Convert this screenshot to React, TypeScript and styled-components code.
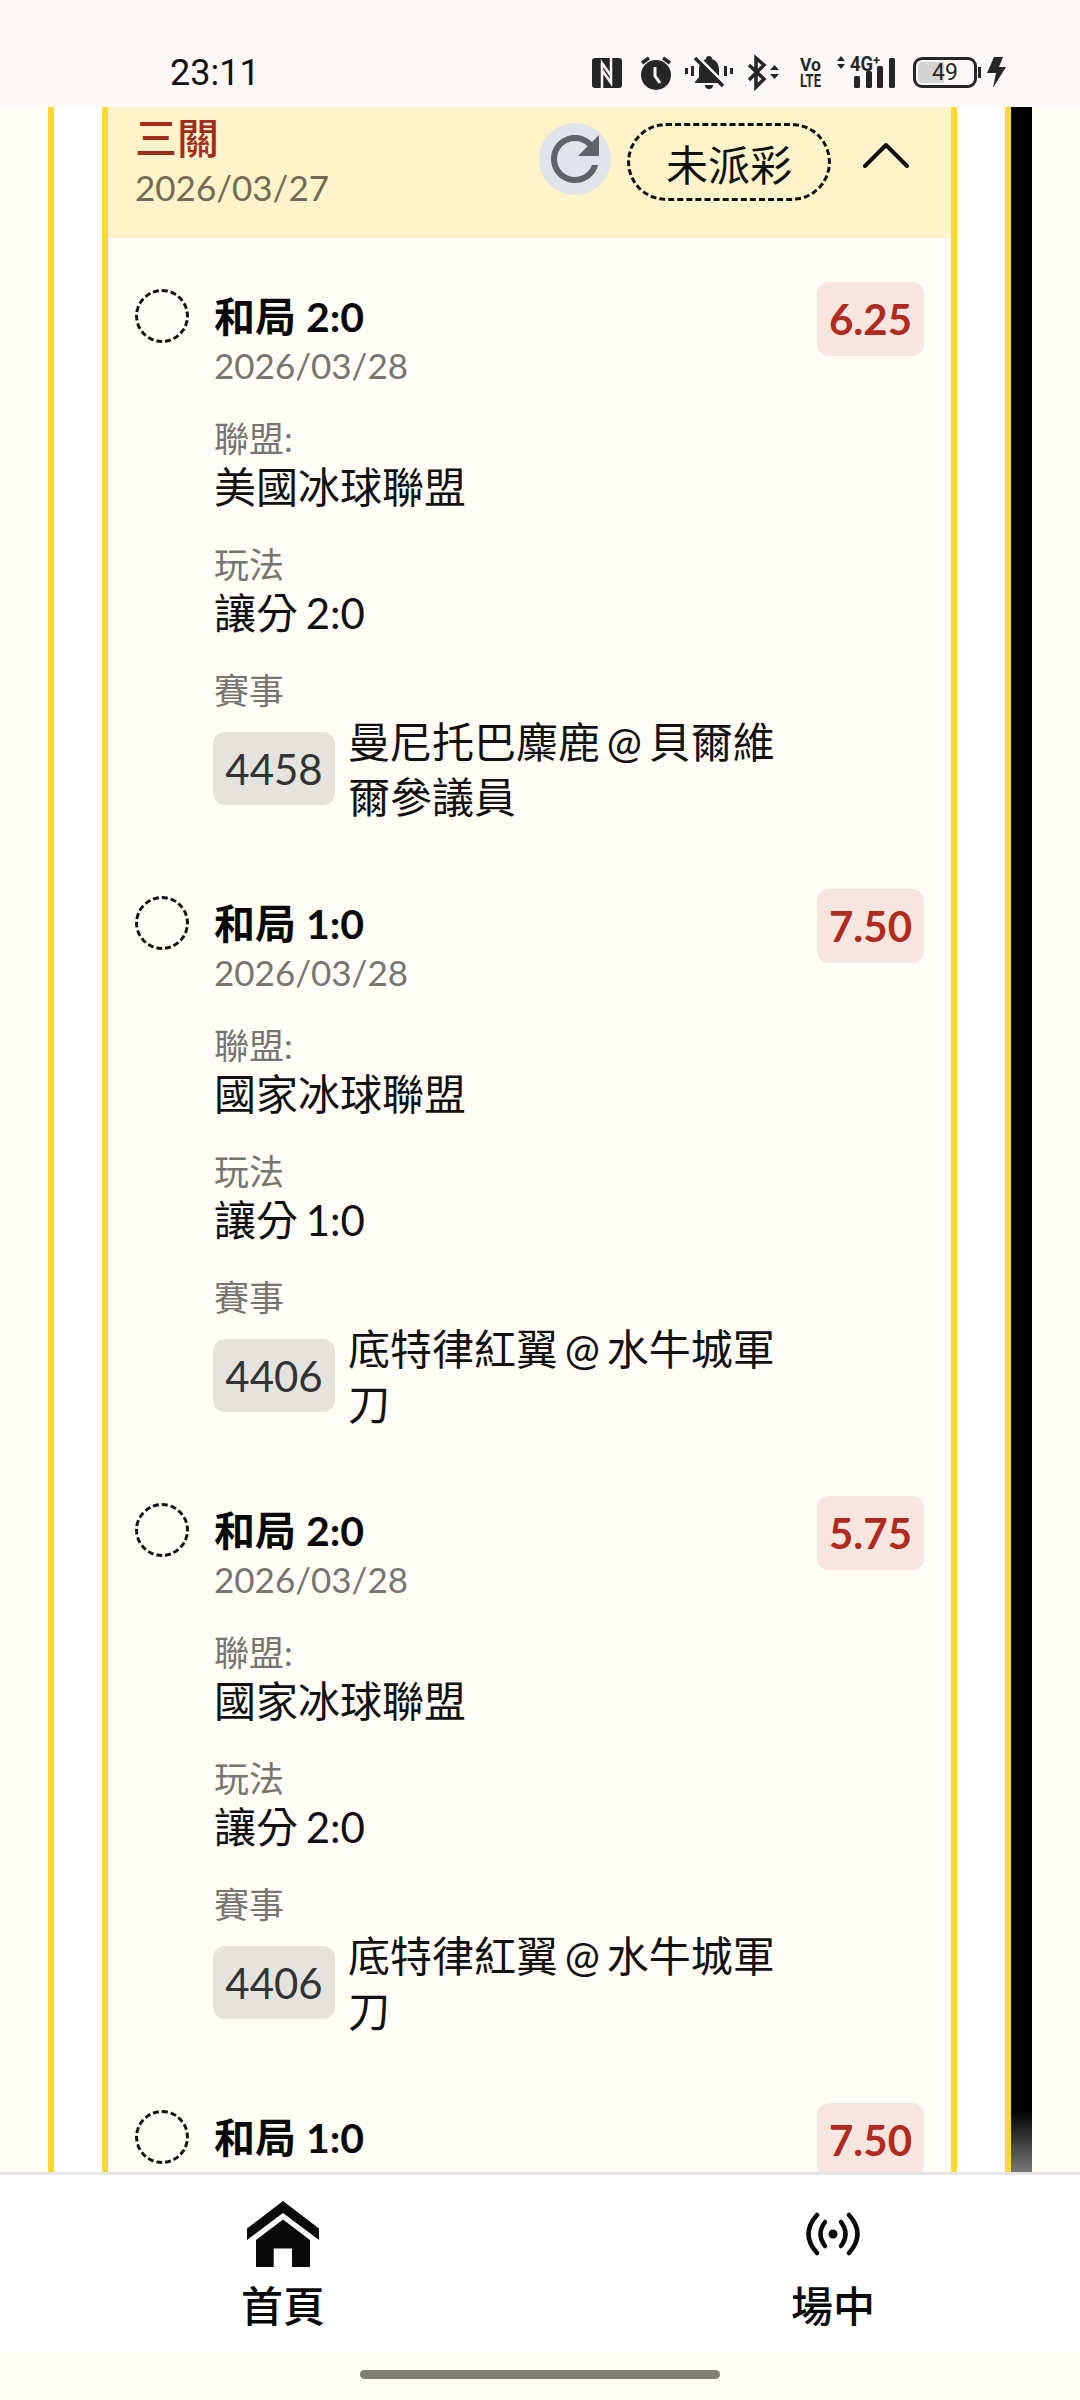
import * as React from "react";
import styled, { createGlobalStyle } from "styled-components";

const latin = `Lato, "Noto Sans CJK TC", sans-serif`;
const statusBg = "#fdf8f8";

interface Bet {
  title: string;
  odds: string;
  league: string;
  play: string;
  code: string;
  match: string;
}

const bets: Bet[] = [
  { title: "和局 2:0", odds: "6.25", league: "美國冰球聯盟", play: "讓分 2:0", code: "4458", match: "曼尼托巴麋鹿 @ 貝爾維爾參議員" },
  { title: "和局 1:0", odds: "7.50", league: "國家冰球聯盟", play: "讓分 1:0", code: "4406", match: "底特律紅翼 @ 水牛城軍刀" },
  { title: "和局 2:0", odds: "5.75", league: "國家冰球聯盟", play: "讓分 2:0", code: "4406", match: "底特律紅翼 @ 水牛城軍刀" },
  { title: "和局 1:0", odds: "7.50", league: "國家冰球聯盟", play: "讓分 1:0", code: "4406", match: "底特律紅翼 @ 水牛城軍刀" },
];

const GlobalStyle = createGlobalStyle`
  html, body {
    margin: 0;
    padding: 0;
    background: #fffdf5;
    font-family: ${latin};
  }
  * { box-sizing: border-box; }
`;

const Page = styled.div`
  width: 1080px;
  height: 2400px;
  display: flex;
  flex-direction: column;
  overflow: hidden;
  background: #fffdf5;
`;

const StatusBar = styled.div`
  height: 107px;
  flex: none;
  background: ${statusBg};
  display: flex;
  align-items: center;
  justify-content: space-between;
  padding: 38px 74px 0 170px;
`;

const Clock = styled.span`
  font-family: Roboto, sans-serif;
  font-size: 36px;
  font-weight: 400;
  color: #111;
`;

const StatusIcons = styled.div`
  display: flex;
  align-items: center;
`;

const StatusIcon = styled.svg<{ $gap: number }>`
  display: block;
  overflow: visible;
  margin-left: ${p => p.$gap}px;
  fill: #262626;
`;

const BatteryWrap = styled.div`
  position: relative;
  width: 64px;
  height: 31px;
  margin-left: 18px;
  border: 3px solid #262626;
  border-radius: 9px;
  display: flex;
  align-items: center;
  justify-content: center;
  font-family: Roboto, sans-serif;
  font-size: 23px;
  color: #262626;
  background: linear-gradient(to right, #d4d4d4 0 48%, transparent 48%);
  background-clip: content-box;
  padding: 2px;

  &::after {
    content: "";
    position: absolute;
    right: -7px;
    top: 7px;
    width: 3px;
    height: 11px;
    background: #262626;
  }
`;

const Content = styled.div`
  flex: 1;
  min-height: 0;
  overflow: hidden;
  display: flex;
  align-items: stretch;
  padding-left: 48px;
`;

const OuterFrame = styled.div`
  width: 963px;
  flex: none;
  background: #fff;
  border-left: 6px solid #fdd835;
  border-right: 6px solid #fdd835;
  padding: 0 48px;
`;

const ScrollThumb = styled.div`
  width: 21px;
  flex: none;
  background: linear-gradient(to bottom, #000 0, #000 97%, #777 100%);
`;

const Card = styled.div`
  height: 100%;
  overflow: hidden;
  background: #fffdf5;
  border-left: 6px solid #fdd835;
  border-right: 6px solid #fdd835;
`;

const CardHeader = styled.div`
  height: 131px;
  background: #fff3c9;
  display: flex;
  align-items: flex-start;
  padding: 0 0 0 27px;
`;

const HeaderTitles = styled.div`
  flex: 1;
  padding-top: 8px;
`;

const GroupName = styled.div`
  font-size: 42px;
  line-height: 46px;
  font-weight: 500;
  color: #a52a1e;
`;

const GroupDate = styled.div`
  font-size: 35px;
  line-height: 48px;
  margin-top: 2px;
  color: #736a55;
`;

const RefreshButton = styled.div`
  width: 72px;
  height: 72px;
  margin-top: 16px;
  border-radius: 50%;
  background: #e1e4e8;
  color: #5f6368;
  display: flex;
  align-items: center;
  justify-content: center;
`;

const StatusPill = styled.div`
  width: 204px;
  height: 78px;
  margin: 16px 0 0 16px;
  border: 3px dashed #111;
  border-radius: 39px;
  display: flex;
  align-items: center;
  justify-content: center;
  font-size: 42px;
  color: #111;
`;

const Chevron = styled.svg`
  margin: 35px 42px 0 32px;
  display: block;
`;

const BetRow = styled.div`
  display: flex;
  align-items: flex-start;
  padding: 44px 27px 20px 27px;
`;

const Bullet = styled.div`
  width: 54px;
  height: 54px;
  flex: none;
  margin-top: 7px;
  border: 3px dashed #111;
  border-radius: 50%;
`;

const BetBody = styled.div`
  flex: 1;
  min-width: 0;
  margin-left: 25px;
  padding-top: 8px;
`;

const BetTitle = styled.div`
  font-size: 41px;
  line-height: 54px;
  font-weight: 700;
  color: #0a0a0a;
`;

const BetDate = styled.div`
  font-size: 35px;
  line-height: 46px;
  margin-top: -2px;
  color: #77756f;
`;

const FieldLabel = styled.div`
  font-size: 35px;
  line-height: 46px;
  margin-top: 27px;
  color: #77756f;
`;

const FieldValue = styled.div`
  font-size: 42px;
  line-height: 54px;
  margin-top: -1px;
  word-spacing: -3px;
  color: #111;
`;

const MatchRow = styled.div`
  display: flex;
  align-items: flex-start;
`;

const CodeChip = styled.div`
  width: 122px;
  height: 73px;
  flex: none;
  margin: 19px 0 0 -1px;
  border-radius: 12px;
  background: #e5e3dd;
  display: flex;
  align-items: center;
  justify-content: center;
  font-size: 42px;
  color: #333;
`;

const MatchName = styled.div`
  width: 440px;
  margin-left: 13px;
  margin-top: 2px;
  font-size: 42px;
  line-height: 55px;
  word-spacing: -4px;
  color: #111;
`;

const OddsBadge = styled.div`
  width: 107px;
  height: 74px;
  flex: none;
  border-radius: 12px;
  background: #f6e6df;
  display: flex;
  align-items: center;
  justify-content: center;
  font-size: 42px;
  font-weight: 700;
  color: #b02a20;
`;

const BottomNav = styled.div`
  height: 180px;
  flex: none;
  background: #fff;
  border-top: 3px solid #e6e6e6;
  display: grid;
  grid-template-columns: 550px 550px;
  padding-left: 8px;
`;

const NavItem = styled.div`
  display: flex;
  flex-direction: column;
  align-items: center;
`;

const NavIconSlot = styled.div`
  height: 66px;
  margin-top: 26px;
  display: flex;
  align-items: center;
  justify-content: center;
  color: #0a0a0a;
`;

const NavLabel = styled.div`
  font-size: 42px;
  line-height: 56px;
  margin-top: 11px;
  font-weight: 500;
  color: #0a0a0a;
`;

const HomeArea = styled.div`
  height: 48px;
  flex: none;
  background: #fffdf5;
  display: flex;
  justify-content: center;
  padding-top: 18px;
`;

const HomeBar = styled.div`
  width: 360px;
  height: 9px;
  border-radius: 5px;
  background: #7f7e79;
`;

function StatusGlyphs() {
  return (
    <StatusIcons>
      {/* nfc */}
      <StatusIcon $gap={0} width="30" height="30" viewBox="0 0 30 30">
        <rect width="30" height="30" rx="3" />
        <path d="M10 30V5l9 13M19 0v25l-9-13" fill="none" stroke={statusBg} strokeWidth="2.500" />
      </StatusIcon>
      {/* alarm clock */}
      <StatusIcon $gap={18} width="32" height="34" viewBox="0 0 32 34">
        <circle cx="16" cy="19" r="15" />
        <path d="M15 11v9l5 7" fill="none" stroke={statusBg} strokeWidth="3" />
        <path d="M2 7l7-5M30 7l-7-5" fill="none" stroke="#262626" strokeWidth="3.500" />
      </StatusIcon>
      {/* muted bell */}
      <StatusIcon $gap={13} width="48" height="34" viewBox="0 0 48 34">
        <path d="M24 0a3 3 0 0 1 3 3c5 1.500 7 6 7 11v7l4 5v1H10v-1l4-5v-7c0-5 2-9.500 7-11a3 3 0 0 1 3-3z" />
        <path d="M20 29h8a4 4 0 0 1-8 0z" />
        <path d="M12 0l28 28" fill="none" stroke={statusBg} strokeWidth="3" />
        <path d="M10 2l28 28" fill="none" stroke="#262626" strokeWidth="3.500" />
        <rect x="0" y="12" width="3" height="6" />
        <rect x="6" y="10" width="3" height="10" />
        <rect x="39" y="10" width="3" height="10" />
        <rect x="45" y="12" width="3" height="6" />
      </StatusIcon>
      {/* bluetooth with transfer arrows */}
      <StatusIcon $gap={14} width="35" height="33" viewBox="0 0 35 33">
        <path d="M2 9l15 14-8 8V2l8 7L2 24" fill="none" stroke="#262626" strokeWidth="3.500" />
        <path d="M23 14l4.500-5 4.500 5zM23 18h9l-4.500 5z" />
      </StatusIcon>
      {/* volte */}
      <StatusIcon $gap={18} width="22" height="30" viewBox="0 0 22 30">
        <text x="0" y="13" fontFamily="Roboto, sans-serif" fontWeight="700" fontSize="18" textLength="21" lengthAdjust="spacingAndGlyphs">Vo</text>
        <text x="0" y="29" fontFamily="Roboto, sans-serif" fontWeight="700" fontSize="18" textLength="21" lengthAdjust="spacingAndGlyphs">LTE</text>
      </StatusIcon>
      {/* 4g+ signal */}
      <StatusIcon $gap={14} width="59" height="33" viewBox="0 0 59 33">
        <path d="M1 5l4-5 4 5zM1 8h8l-4 5z" />
        <text x="14" y="15" fontFamily="Roboto, sans-serif" fontWeight="700" fontSize="20" textLength="23" lengthAdjust="spacingAndGlyphs">4G</text>
        <text x="37" y="9" fontFamily="Roboto, sans-serif" fontWeight="700" fontSize="13">+</text>
        <rect x="18" y="20" width="6" height="12" rx="1.500" />
        <rect x="30" y="15" width="6" height="17" rx="1.500" />
        <rect x="41" y="10" width="6" height="22" rx="1.500" />
        <rect x="53" y="2" width="6" height="30" rx="1.500" />
      </StatusIcon>
      <BatteryWrap>49</BatteryWrap>
      {/* charging bolt */}
      <StatusIcon $gap={10} width="19" height="31" viewBox="0 0 19 31">
        <path d="M7 0h9l-4 10h7L6 31l3-15H0z" />
      </StatusIcon>
    </StatusIcons>
  );
}

function HomeIcon() {
  return (
    <svg width="74" height="66" viewBox="0 0 74 66" fill="currentColor">
      <path d="M37 0l36 27.500V39L37 12 1 39V27.500z" />
      <path d="M37 18.500L64 39v27H46V47.500H27.700V66H10V39z" />
    </svg>
  );
}

// two arcs on either side of a dot
function LiveIcon() {
  return (
    <svg width="54" height="44" viewBox="0 0 54 44" fill="none" stroke="currentColor" strokeWidth="4.500" strokeLinecap="round">
      <path d="M11 3Q-6 22 11 41" />
      <path d="M43 3Q60 22 43 41" />
      <path d="M19 10Q10 22 19 34" />
      <path d="M35 10Q44 22 35 34" />
      <circle cx="27" cy="22" r="4.500" fill="currentColor" stroke="none" />
    </svg>
  );
}

function BetItem({ bet }: { bet: Bet }) {
  return (
    <BetRow>
      <Bullet />
      <BetBody>
        <BetTitle>{bet.title}</BetTitle>
        <BetDate>2026/03/28</BetDate>
        <FieldLabel>聯盟:</FieldLabel>
        <FieldValue>{bet.league}</FieldValue>
        <FieldLabel>玩法</FieldLabel>
        <FieldValue>{bet.play}</FieldValue>
        <FieldLabel>賽事</FieldLabel>
        <MatchRow>
          <CodeChip>{bet.code}</CodeChip>
          <MatchName>{bet.match}</MatchName>
        </MatchRow>
      </BetBody>
      <OddsBadge>{bet.odds}</OddsBadge>
    </BetRow>
  );
}

export default function App() {
  return (
    <Page>
      <GlobalStyle />
      <StatusBar>
        <Clock>23:11</Clock>
        <StatusGlyphs />
      </StatusBar>
      <Content>
        <OuterFrame>
          <Card>
            <CardHeader>
              <HeaderTitles>
                <GroupName>三關</GroupName>
                <GroupDate>2026/03/27</GroupDate>
              </HeaderTitles>
              <RefreshButton>
                <svg width="72" height="72" viewBox="0 0 24 24" fill="currentColor">
                  <path d="M17.65 6.35C16.2 4.9 14.21 4 12 4c-4.42 0-7.99 3.58-7.99 8s3.57 8 7.99 8c3.73 0 6.84-2.55 7.73-6h-2.08c-.82 2.33-3.04 4-5.65 4-3.31 0-6-2.69-6-6s2.69-6 6-6c1.66 0 3.14.69 4.22 1.78L13 11h7V4l-2.35 2.35z" />
                </svg>
              </RefreshButton>
              <StatusPill>未派彩</StatusPill>
              <Chevron width="46" height="26" viewBox="0 0 46 26" fill="none" stroke="#111" strokeWidth="4" strokeLinecap="round" strokeLinejoin="round">
                <path d="M2 24L23 3l21 21" />
              </Chevron>
            </CardHeader>
            {bets.map((bet, i) => <BetItem key={i} bet={bet} />)}
          </Card>
        </OuterFrame>
        <ScrollThumb />
      </Content>
      <BottomNav>
        <NavItem>
          <NavIconSlot><HomeIcon /></NavIconSlot>
          <NavLabel>首頁</NavLabel>
        </NavItem>
        <NavItem>
          <NavIconSlot><LiveIcon /></NavIconSlot>
          <NavLabel>場中</NavLabel>
        </NavItem>
      </BottomNav>
      <HomeArea><HomeBar /></HomeArea>
    </Page>
  );
}
